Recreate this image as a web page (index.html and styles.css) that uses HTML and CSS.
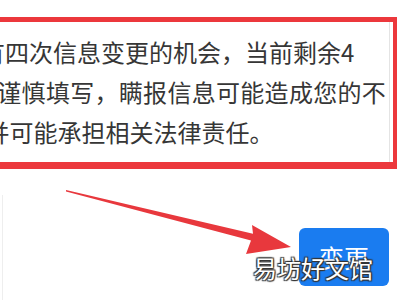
FILE: index.html
```html
<!DOCTYPE html>
<html lang="zh-CN">
<head>
<meta charset="utf-8">
<link rel="stylesheet" href="styles.css">
</head>
<body>
<div class="page">
  <div class="notice">
    <div class="line l1">有四次信息变更的机会，当前剩余4</div>
    <div class="line l2">请谨慎填写，瞒报信息可能造成您的不</div>
    <div class="line l3">并可能承担相关法律责任。</div>
  </div>
  <div class="actions">
    <button class="btn">变更</button>
  </div>
  <svg class="arrow" width="400" height="300" viewBox="0 0 400 300">
    <polygon points="66,190 253,233.8 252,225 291,247 246,254 251,240.6 66,191.6" fill="#e8383d"/>
  </svg>
  <div class="watermark">易坊好文馆</div>
</div>
</body>
</html>
```
FILE: styles.css
```css
html, body {
  margin: 0;
  padding: 0;
  background: #fff;
}
.page {
  position: relative;
  width: 400px;
  height: 300px;
  overflow: hidden;
  font-family: "Noto Sans CJK SC", "Noto Sans", sans-serif;
}
.notice {
  margin: 17px 3px 0 -40px;
  border-style: solid;
  border-color: #ec383c;
  border-width: 5px 4px 7px 4px;
  padding: 10px 0 10px 0;
  box-shadow: inset -3px 0 0 #fff, inset -4px 0 0 #e4e4e4;
}
.line {
  font-size: 24px;
  line-height: 40px;
  color: #363636;
  white-space: nowrap;
}
.l1 { margin-left: 17px; }
.l2 { margin-left: 9px; letter-spacing: 0.3px; }
.l3 { margin-left: 21.5px; }
.actions {
  display: flex;
  justify-content: flex-end;
  margin: 26px 0 0 2px;
  padding: 33px 11px 14px 0;
  border-left: 1px solid #eeeeee;
}
.btn {
  width: 90px;
  height: 58px;
  border: none;
  border-radius: 6px;
  background: #1a7cf0;
  color: #fff;
  font-family: "Noto Sans CJK SC", "Noto Sans", sans-serif;
  font-size: 25px;
  padding: 0;
}
.arrow {
  position: absolute;
  left: 0;
  top: 0;
  pointer-events: none;
}
.watermark {
  position: absolute;
  left: 253px;
  top: 254px;
  font-size: 24px;
  line-height: 28px;
  color: #fff;
  white-space: nowrap;
  text-shadow: 1px 1px 1px #333, -1px -1px 1px #333, 1px -1px 1px #333, -1px 1px 1px #333;
}
```
